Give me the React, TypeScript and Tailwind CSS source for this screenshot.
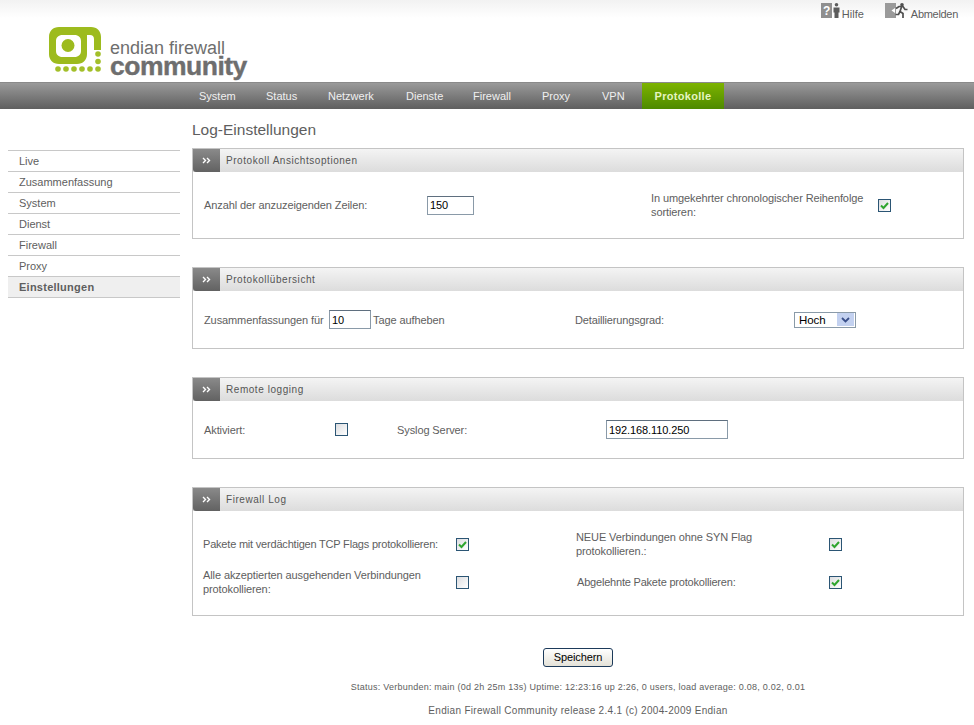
import type { ReactNode } from 'react';

const navItems = ['System', 'Status', 'Netzwerk', 'Dienste', 'Firewall', 'Proxy', 'VPN'];
const navWidths = ['w-[67px]', 'w-[62px]', 'w-[78px]', 'w-[67px]', 'w-[69px]', 'w-[60px]', 'w-[40px]'];
const sideItems = ['Live', 'Zusammenfassung', 'System', 'Dienst', 'Firewall', 'Proxy'];

function Logo() {
    return (
        <svg width="54" height="46" viewBox="0 0 54 46" className="shrink-0">
            {/* the "o" ring and the top bar of the "n" */}
            <path
                fillRule="evenodd"
                d="M10 0H42C48 0 52 4 52 10V23H45V12C45 9.5 43.5 8 41 8H38V27C38 33 34 37 28 37H10C4 37 0 33 0 27V10C0 4 4 0 10 0ZM13.5 8C9.5 8 7 10.5 7 14V24C7 27.5 9.5 30 13.5 30H25.5C29.5 30 32 27.5 32 24V14C32 10.5 29.5 8 25.5 8Z"
                fill="#9dbb1e"
            />
            <circle cx="19" cy="18.5" r="6.5" fill="#9dbb1e" />
            {[9, 17, 25, 33, 41, 49].map((cx) => (
                <circle key={cx} cx={cx} cy="42" r="2.8" fill="#a3bf2a" />
            ))}
            <circle cx="49" cy="27" r="2.8" fill="#a3bf2a" />
            <circle cx="49" cy="34.5" r="2.8" fill="#a3bf2a" />
        </svg>
    );
}

function HelpIcon() {
    return (
        <svg width="19" height="15" viewBox="0 0 19 15" className="shrink-0">
            <rect x="0" y="0" width="11" height="15" fill="#8f8f8f" />
            <text x="2" y="12" fontSize="12" fontWeight="700" fill="#fff" fontFamily="Liberation Sans">
                ?
            </text>
            <circle cx="15.5" cy="1.8" r="1.8" fill="#5c5c5c" />
            <path d="M12.5 4.5h6v5h-1v5.5h-4V9.5h-1z" fill="#5c5c5c" />
        </svg>
    );
}

function LogoutIcon() {
    return (
        <svg width="23" height="15" viewBox="0 0 23 15" className="shrink-0">
            <rect x="0" y="0" width="11" height="15" fill="#9a9a9a" />
            <path d="M10 5L6.5 7.5 10 10z" fill="#fff" />
            <circle cx="17" cy="1.8" r="1.8" fill="#4f4f4f" />
            <path
                d="M11 5.5l3-2h4l2 3 2.5 0M16.5 4l-1.5 4.5 3 2 0 4.5M15 8.5l-1.5 3-3 0"
                fill="none"
                stroke="#4f4f4f"
                strokeWidth="1.7"
            />
        </svg>
    );
}

function Checkbox({ checked = false }: { checked?: boolean }) {
    return (
        <span className="flex h-[13px] w-[13px] shrink-0 items-center justify-center border border-[#2b5574] bg-gradient-to-br from-[#dcdde0] to-white">
            {checked && (
                <svg width="9" height="9" viewBox="0 0 9 9">
                    <path d="M1 4.5l2.5 2.5L8 2" fill="none" stroke="#2fa52f" strokeWidth="2" />
                </svg>
            )}
        </span>
    );
}

function TextInput({ value, className }: { value: string; className: string }) {
    return (
        <input
            readOnly
            value={value}
            className={`border border-[#8a9aa8] border-t-[#5f6f7f] bg-white px-[2px] font-['Liberation_Sans',sans-serif] text-[11px] text-black outline-none ${className}`}
        />
    );
}

function Panel({ title, bodyClass, children }: { title: string; bodyClass: string; children: ReactNode }) {
    return (
        <section className="border border-[#c4c4c4]">
            <div className="flex h-[23px] items-stretch bg-gradient-to-b from-[#f4f4f4] to-[#dcdcdc]">
                <div className="flex w-[27px] items-center justify-center rounded-bl-[3px] bg-gradient-to-b from-[#8a8a8a] to-[#626262]">
                    <svg width="9" height="7" viewBox="0 0 9 7">
                        <path d="M1 1l2.5 2.5L1 6M5 1l2.5 2.5L5 6" fill="none" stroke="#fff" strokeWidth="1.4" />
                    </svg>
                </div>
                <h2 className="flex items-center pl-[6px] text-[10px] leading-none tracking-[0.55px] text-[#555]">{title}</h2>
            </div>
            <div className={bodyClass}>{children}</div>
        </section>
    );
}

export default function App() {
    return (
        <div className="h-[725px] w-[974px] overflow-hidden bg-white font-['Liberation_Sans',sans-serif] text-[11px] text-[#5e5e5e]">
            <header className="relative h-[82px] bg-gradient-to-b from-[#f2f2f2] to-white to-[18px]">
                <div className="absolute right-[16px] top-[3px] flex items-start">
                    <div className="flex items-start gap-[2px]">
                        <HelpIcon />
                        <span className="mt-[5px] leading-[12px]">Hilfe</span>
                    </div>
                    <div className="ml-[21px] flex items-start gap-[3px]">
                        <LogoutIcon />
                        <span className="mt-[5px] leading-[12px] tracking-[-0.3px]">Abmelden</span>
                    </div>
                </div>
                <div className="flex items-start pl-[49px] pt-[27px]">
                    <Logo />
                    <div className="ml-[7px] mt-[14px] text-[#6e6e6e]">
                        <div className="h-[14px] text-[18px] leading-[14px]">endian firewall</div>
                        <div className="text-[26.5px] font-bold leading-[22px] tracking-[-0.5px] [-webkit-text-stroke:0.4px_#6e6e6e]">community</div>
                    </div>
                </div>
            </header>

            <nav className="flex h-[27px] items-stretch border-t border-[#8a8a8a] bg-gradient-to-b from-[#9a9a9a] to-[#5f5f5f] pl-[199px] text-[#f0f0f0]">
                {navItems.map((item, index) => (
                    <a key={item} className={`flex items-center ${navWidths[index]}`}>
                        {item}
                    </a>
                ))}
                <a className="flex w-[82px] items-center justify-center bg-gradient-to-b from-[#7db300] to-[#4d8a00] font-bold tracking-[0.3px] text-[#e6f5c0]">
                    Protokolle
                </a>
            </nav>

            <div className="flex items-start pl-[8px] pr-[10px]">
                <aside className="mt-[41px] w-[172px] border-t border-[#c8c8c8]">
                    {sideItems.map((item) => (
                        <a key={item} className="flex h-[21px] items-center border-b border-[#c8c8c8] pl-[11px]">
                            {item}
                        </a>
                    ))}
                    <a className="flex h-[21px] items-center border-b border-[#c8c8c8] bg-[#efefef] pl-[11px] font-bold tracking-[0.25px]">
                        Einstellungen
                    </a>
                </aside>

                <main className="ml-[12px] flex-1 tracking-[-0.1px]">
                    <h1 className="mt-[12px] h-[27px] text-[15.5px] leading-[18px] tracking-normal">Log-Einstellungen</h1>

                    <Panel title="Protokoll Ansichtsoptionen" bodyClass="flex h-[66px] items-center pl-[11px]">
                        <span className="w-[223px]">Anzahl der anzuzeigenden Zeilen:</span>
                        <TextInput value="150" className="h-[19px] w-[47px]" />
                        <span className="ml-[177px] w-[227px] leading-[14px]">
                            In umgekehrter chronologischer Reihenfolge sortieren:
                        </span>
                        <Checkbox checked />
                    </Panel>

                    <div className="mt-[28px]">
                        <Panel title="Protokollübersicht" bodyClass="flex h-[57px] items-center pl-[11px]">
                            <span className="w-[125px] pt-[2px]">Zusammenfassungen für</span>
                            <TextInput value="10" className="h-[19px] w-[42px]" />
                            <span className="ml-[2px] w-[202px] pt-[2px]">Tage aufheben</span>
                            <span className="w-[219px] pt-[2px] tracking-[-0.15px]">Detaillierungsgrad:</span>
                            <div className="flex h-[16px] w-[62px] items-center justify-between border border-[#8a9aa8] pl-[4px] pr-px text-[11.5px] text-black">
                                <span className="pt-[2px]">Hoch</span>
                                <span className="flex h-[13px] w-[17px] items-center justify-center bg-[#c3d1f0]">
                                    <svg width="9" height="6" viewBox="0 0 9 6">
                                        <path d="M1 1l3.5 3.5L8 1" fill="none" stroke="#3a4f8a" strokeWidth="1.8" />
                                    </svg>
                                </span>
                            </div>
                        </Panel>
                    </div>

                    <div className="mt-[28px]">
                        <Panel title="Remote logging" bodyClass="flex h-[57px] items-center pl-[11px]">
                            <span className="w-[131px] pt-[2px]">Aktiviert:</span>
                            <Checkbox />
                            <span className="ml-[49px] w-[209px] pt-[2px]">Syslog Server:</span>
                            <TextInput value="192.168.110.250" className="h-[19px] w-[122px]" />
                        </Panel>
                    </div>

                    <div className="mt-[28px]">
                        <Panel title="Firewall Log" bodyClass="grid h-[104px] grid-cols-[253px_120px_253px_auto] content-center items-center gap-y-[10px] pl-[10px]">
                            <span className="tracking-[-0.2px]">Pakete mit verdächtigen TCP Flags protokollieren:</span>
                            <Checkbox checked />
                            <span className="w-[210px] leading-[14px]">NEUE Verbindungen ohne SYN Flag protokollieren.:</span>
                            <Checkbox checked />
                            <span className="w-[240px] leading-[14px]">Alle akzeptierten ausgehenden Verbindungen protokollieren:</span>
                            <Checkbox />
                            <span className="pl-px tracking-[-0.2px]">Abgelehnte Pakete protokollieren:</span>
                            <Checkbox checked />
                        </Panel>
                    </div>

                    <div className="mt-[32px] flex flex-col items-center">
                        <button className="h-[19px] w-[70px] rounded-[3px] border border-[#1c3a5a] bg-gradient-to-b from-white to-[#e4e2d8] text-[11px] text-black">
                            Speichern
                        </button>
                        <p className="mt-[14px] text-[9px] tracking-[0.24px]">
                            Status: Verbunden: main (0d 2h 25m 13s) Uptime: 12:23:16 up 2:26, 0 users, load average: 0.08, 0.02, 0.01
                        </p>
                        <p className="mt-[8px] text-[10px] tracking-[0.3px]">
                            Endian Firewall Community release 2.4.1 (c) 2004-2009 Endian
                        </p>
                    </div>
                </main>
            </div>
        </div>
    );
}
